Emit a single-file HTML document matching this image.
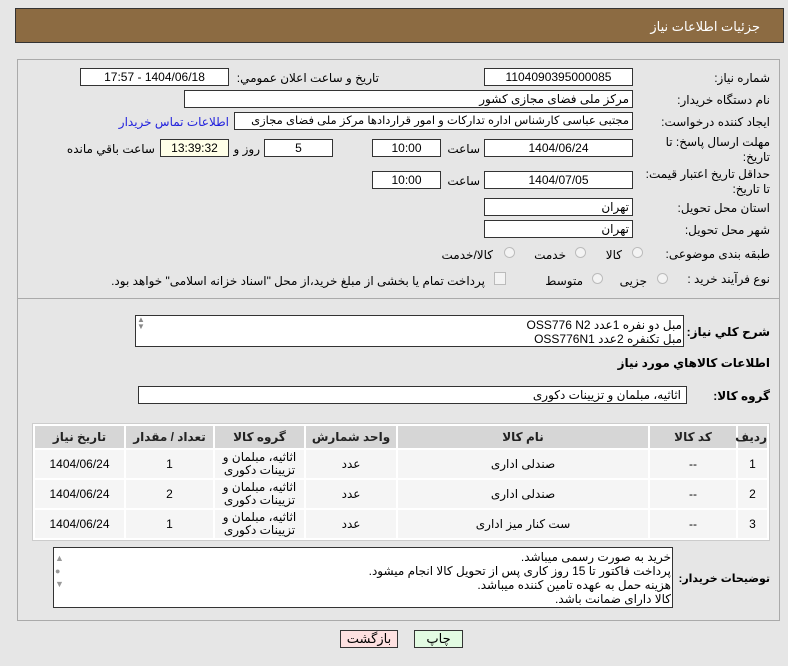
<!DOCTYPE html>
<html><head><meta charset="utf-8"><style>
body{margin:0;width:788px;height:666px;background:#e6e6e6;font-family:"Liberation Sans","DejaVu Sans",sans-serif;font-size:12px;color:#000;position:relative;overflow:hidden}
.a{position:absolute;white-space:nowrap}
.r{direction:rtl;text-align:right}
.box{position:absolute;background:#fff;border:1px solid #333;box-sizing:border-box;height:18px;line-height:16px;font-size:12px;text-align:center;direction:rtl;overflow:hidden;white-space:nowrap}
.lbl{position:absolute;direction:rtl;text-align:right;white-space:nowrap;font-size:12px}
.rad{position:absolute;width:11px;height:11px;border-radius:50%;border:1px solid #bbb;background:#f3f3f3;box-sizing:border-box}
table{position:absolute;left:32px;top:423px;width:738px;border-collapse:separate;border-spacing:2px;background:#fff;border:1px solid #ccc;direction:rtl;table-layout:fixed}
th{background:#d6d6d6;height:22px;padding:0;font-size:12px;font-weight:bold;color:#222}
td{background:#f5f5f5;height:28px;padding:0;text-align:center;font-size:12px;line-height:13px}
</style></head><body>
<div class="a" style="left:15px;top:8px;width:769px;height:35px;background:#8c6b42;border:1px solid #333;box-sizing:border-box"></div>
<div class="a r" style="right:28px;top:19px;color:#fff;font-size:13px">جزئیات اطلاعات نیاز</div>
<div class="a" style="left:17px;top:59px;width:763px;height:562px;border:1px solid #aaa;box-sizing:border-box"></div>
<div class="a" style="left:17px;top:298px;width:763px;border-top:1px solid #aaa"></div>

<div class="lbl" style="right:18px;top:71px">شماره نیاز:</div>
<div class="box" style="left:484px;top:68px;width:149px">1104090395000085</div>
<div class="lbl" style="right:409px;top:71px">تاريخ و ساعت اعلان عمومي:</div>
<div class="box" style="left:80px;top:68px;width:149px">1404/06/18 - 17:57</div>

<div class="lbl" style="right:18px;top:93px">نام دستگاه خریدار:</div>
<div class="box" style="left:184px;top:90px;width:449px;text-align:right;padding-right:3px">مرکز ملی فضای مجازی کشور</div>

<div class="lbl" style="right:18px;top:115px">ایجاد کننده درخواست:</div>
<div class="box" style="left:234px;top:112px;width:399px;text-align:right;padding-right:3px;font-size:11.5px">مجتبی عباسی کارشناس اداره تدارکات و امور قراردادها مرکز ملی فضای مجازی</div>
<div class="lbl" style="right:559px;top:115px;color:#2222dd">اطلاعات تماس خریدار</div>

<div class="lbl" style="right:18px;top:135px;line-height:15px">مهلت ارسال پاسخ: تا<br>تاریخ:</div>
<div class="box" style="left:484px;top:139px;width:149px">1404/06/24</div>
<div class="lbl" style="right:308px;top:142px">ساعت</div>
<div class="box" style="left:372px;top:139px;width:69px">10:00</div>
<div class="box" style="left:264px;top:139px;width:69px">5</div>
<div class="lbl" style="right:528px;top:142px">روز و</div>
<div class="box" style="left:160px;top:139px;width:69px;background:#ffffe8">13:39:32</div>
<div class="lbl" style="right:633px;top:142px">ساعت باقي مانده</div>

<div class="lbl" style="right:18px;top:167px;line-height:15px">حداقل تاریخ اعتبار قیمت:<br>تا تاریخ:</div>
<div class="box" style="left:484px;top:171px;width:149px">1404/07/05</div>
<div class="lbl" style="right:308px;top:174px">ساعت</div>
<div class="box" style="left:372px;top:171px;width:69px">10:00</div>

<div class="lbl" style="right:18px;top:201px">استان محل تحویل:</div>
<div class="box" style="left:484px;top:198px;width:149px;text-align:right;padding-right:3px">تهران</div>
<div class="lbl" style="right:18px;top:223px">شهر محل تحویل:</div>
<div class="box" style="left:484px;top:220px;width:149px;text-align:right;padding-right:3px">تهران</div>

<div class="lbl" style="right:18px;top:247px">طبقه بندی موضوعی:</div>
<div class="rad" style="left:632px;top:247px"></div><div class="lbl" style="right:166px;top:248px">کالا</div>
<div class="rad" style="left:575px;top:247px"></div><div class="lbl" style="right:222px;top:248px">خدمت</div>
<div class="rad" style="left:504px;top:247px"></div><div class="lbl" style="right:295px;top:248px">کالا/خدمت</div>

<div class="lbl" style="right:18px;top:272px">نوع فرآیند خرید :</div>
<div class="rad" style="left:657px;top:273px"></div><div class="lbl" style="right:141px;top:274px">جزیی</div>
<div class="rad" style="left:592px;top:273px"></div><div class="lbl" style="right:205px;top:274px">متوسط</div>
<div class="a" style="left:494px;top:272px;width:10px;height:11px;border:1px solid #bbb;background:#f3f3f3"></div>
<div class="lbl" style="right:303px;top:274px">پرداخت تمام یا بخشی از مبلغ خرید،از محل "اسناد خزانه اسلامی" خواهد بود.</div>

<div class="lbl" style="right:18px;top:325px;font-weight:bold">شرح کلي نياز:</div>
<div class="a" style="left:135px;top:315px;width:549px;height:32px;background:#fff;border:1px solid #333;box-sizing:border-box"></div>
<div class="lbl" style="right:106px;top:318px;line-height:14px;font-size:12px">مبل دو نفره 1عدد  OSS776 N2<br>مبل تکنفره 2عدد OSS776N1</div>
<div class="a" style="left:137px;top:316px;color:#888;font-size:8px;line-height:7px">▲<br>▼</div>

<div class="lbl" style="right:18px;top:356px;font-weight:bold">اطلاعات کالاهاي مورد نياز</div>
<div class="lbl" style="right:18px;top:389px;font-weight:bold">گروه کالا:</div>
<div class="box" style="left:138px;top:386px;width:549px;text-align:right;padding-right:5px">اثاثیه، مبلمان و تزیینات دکوری</div>

<table>
<colgroup><col style="width:29px"><col style="width:86px"><col style="width:250px"><col style="width:90px"><col style="width:89px"><col style="width:87px"><col></colgroup>
<tr><th>ردیف</th><th>کد کالا</th><th>نام کالا</th><th>واحد شمارش</th><th>گروه کالا</th><th>تعداد / مقدار</th><th>تاریخ نیاز</th></tr>
<tr><td>1</td><td>--</td><td>صندلی اداری</td><td>عدد</td><td>اثاثیه، مبلمان و<br>تزیینات دکوری</td><td>1</td><td>1404/06/24</td></tr>
<tr><td>2</td><td>--</td><td>صندلی اداری</td><td>عدد</td><td>اثاثیه، مبلمان و<br>تزیینات دکوری</td><td>2</td><td>1404/06/24</td></tr>
<tr><td>3</td><td>--</td><td>ست کنار میز اداری</td><td>عدد</td><td>اثاثیه، مبلمان و<br>تزیینات دکوری</td><td>1</td><td>1404/06/24</td></tr>
</table>

<div class="lbl" style="right:18px;top:572px;font-weight:bold;font-size:11px">توضیحات خریدار:</div>
<div class="a" style="left:53px;top:547px;width:620px;height:61px;background:#fff;border:1px solid #333;box-sizing:border-box"></div>
<div class="lbl" style="right:117px;top:550px;line-height:14px;font-size:12px">خرید به صورت رسمی میباشد.<br>پرداخت فاکتور تا 15 روز کاری پس از تحویل کالا انجام میشود.<br>هزینه حمل به عهده تامین کننده میباشد.<br>کالا دارای ضمانت باشد.</div>
<div class="a" style="left:55px;top:552px;color:#999;font-size:9px;line-height:13px">▲<br>●<br>▼</div>

<div class="a" style="left:340px;top:630px;width:58px;height:18px;background:#fde0e0;border:1px solid #333;box-sizing:border-box;text-align:center;line-height:16px;font-size:13px">بازگشت</div>
<div class="a" style="left:414px;top:630px;width:49px;height:18px;background:#e2fbe2;border:1px solid #333;box-sizing:border-box;text-align:center;line-height:16px;font-size:13px">چاپ</div>
</body></html>
